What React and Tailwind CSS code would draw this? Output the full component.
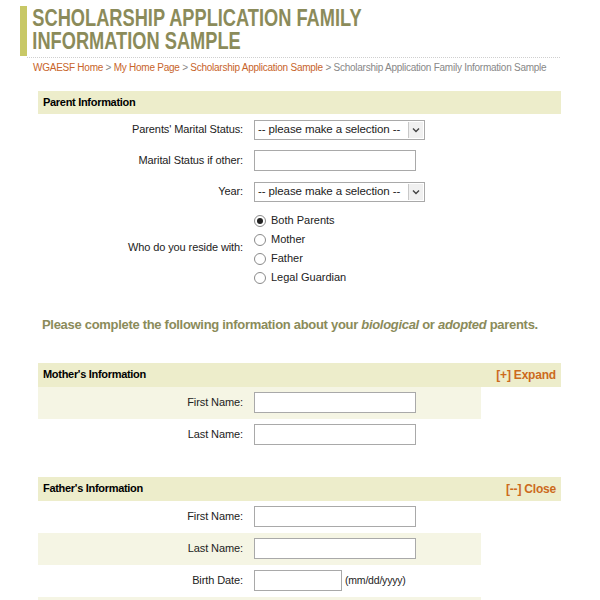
import React, { useState } from 'react';

const font = { fontFamily: '"Liberation Sans", Arial, sans-serif' };

function Row({ label, shade, children, tall, h = 'h-[32px]' }) {
  return (
    <div className={`flex w-[443px] items-center ${shade ? 'bg-[#f5f5e4]' : ''} ${tall ? '' : h}`}>
      <div className="w-[216px] shrink-0 pr-[11px] text-right text-[11px] tracking-[-0.1px] text-[#222]">{label}</div>
      <div className="flex items-center">{children}</div>
    </div>
  );
}

function TextBox({ w = 'w-[162px]' }) {
  return <input className={`h-[21px] ${w} border border-[#a9a9a9] bg-white px-1 text-[11px]`} />;
}

function Select() {
  return (
    <div className="flex h-[20px] w-[171px] items-center border border-[#a9a9a9] bg-white text-[11.5px] text-[#222]">
      <span className="flex-1 whitespace-nowrap overflow-hidden pl-[3px] tracking-[-0.1px]">-- please make a selection --</span>
      <span className="mr-[1px] flex h-[16px] w-[15px] items-center justify-center border-l border-[#c8c8c8] bg-[#f0f0f0]">
        <svg width="8" height="6" viewBox="0 0 8 6"><path d="M1 1.5 L4 4.5 L7 1.5" stroke="#444" strokeWidth="1.4" fill="none" /></svg>
      </span>
    </div>
  );
}

function Radio({ checked, label }) {
  return (
    <label className="flex h-[19px] items-center gap-[5px] text-[11px] text-[#222]">
      <span className="flex h-[12px] w-[12px] items-center justify-center rounded-full border border-[#8a8a8a] bg-white">
        {checked && <span className="h-[6px] w-[6px] rounded-full bg-[#222]" />}
      </span>
      {label}
    </label>
  );
}

function Bar({ title, action, h = 'h-[24px]' }) {
  return (
    <div className={`flex ${h} items-center justify-between bg-[#ededcb] px-[5px]`}>
      <span className="text-[11px] font-bold tracking-[-0.3px] text-black">{title}</span>
      {action && <span className="text-[12px] font-bold tracking-[-0.2px] text-[#cc6a1c]">{action}</span>}
    </div>
  );
}

export default function App() {
  const [who] = useState('both');
  return (
    <div className="h-[600px] w-[600px] overflow-hidden bg-white" style={font}>
      <div className="flex pl-[20px] pt-[6px]">
        <div className="w-[7px] bg-[#c8c866]" />
        <h1 className="origin-left scale-x-[0.76] whitespace-nowrap pb-[4px] pl-[7px] text-[24px] font-bold uppercase leading-[23px] text-[#8b8b5a]">
          Scholarship Application Family<br />Information Sample
        </h1>
      </div>
      <div className="ml-[27px] mr-[40px] mt-[1px] border-b border-dotted border-[#cfcfcf]" />
      <div className="ml-[33px] mt-[3px] whitespace-nowrap text-[10px] leading-[14px] tracking-[-0.25px] text-[#888]">
        <span className="text-[#c8642a]">WGAESF Home</span> &gt;{' '}
        <span className="text-[#c8642a]">My Home Page</span> &gt;{' '}
        <span className="text-[#c8642a]">Scholarship Application Sample</span> &gt; Scholarship Application Family Information Sample
      </div>

      <div className="ml-[38px] mr-[39px] mt-[16px]">
        <Bar title="Parent Information" h="h-[23px]" />
        <Row label="Parents' Marital Status:" h="h-[31px]"><Select /></Row>
        <Row label="Marital Status if other:" h="h-[31px]"><TextBox /></Row>
        <Row label="Year:" h="h-[31px]"><Select /></Row>
        <Row label="Who do you reside with:" tall>
          <div className="flex flex-col pt-[4px]">
            <Radio checked={who === 'both'} label="Both Parents" />
            <Radio label="Mother" />
            <Radio label="Father" />
            <Radio label="Legal Guardian" />
          </div>
        </Row>

        <p className="mt-[28px] whitespace-nowrap pl-[4px] text-[13px] font-bold tracking-[-0.3px] text-[#8b8b5a]">
          Please complete the following information about your <i>biological</i> or <i>adopted</i> parents.
        </p>

        <div className="mt-[28px]">
          <Bar title="Mother's Information" action="[+] Expand" />
          <Row label="First Name:" shade><TextBox /></Row>
          <Row label="Last Name:"><TextBox /></Row>
        </div>

        <div className="mt-[26px]">
          <Bar title="Father's Information" action="[--] Close" />
          <Row label="First Name:"><TextBox /></Row>
          <Row label="Last Name:" shade><TextBox /></Row>
          <Row label="Birth Date:">
            <TextBox w="w-[88px]" />
            <span className="ml-[3px] text-[10.5px] tracking-[-0.2px] text-[#222]">(mm/dd/yyyy)</span>
          </Row>
          <Row label="" shade />
        </div>
      </div>
    </div>
  );
}
